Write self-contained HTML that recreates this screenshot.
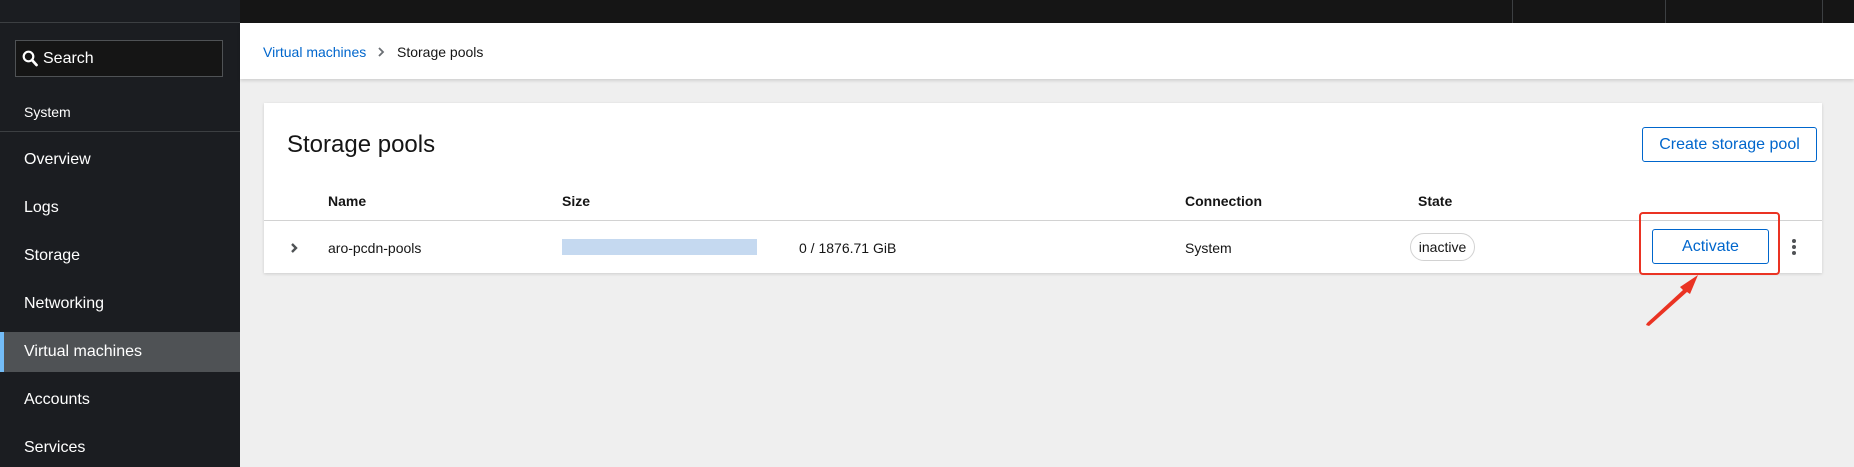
<!DOCTYPE html>
<html><head><meta charset="utf-8"><style>
*{box-sizing:border-box;margin:0;padding:0}
body{width:1854px;height:467px;overflow:hidden;background:#efefef;font-family:"Liberation Sans",sans-serif;position:relative}
.a{position:absolute}
.side{left:0;top:0;width:240px;height:467px;background:#1b1d21}
.nav{left:24px;color:#fff;font-size:16px;transform:translateY(-50%)}
.t{font-size:14px;color:#151515;transform:translateY(-50%)}
.th{font-weight:bold}
</style></head><body>
<div class="a side"></div>
<div class="a" style="left:0;top:0;width:240px;height:23px;border-bottom:1px solid #3c3f42"></div>
<div class="a" style="left:240px;top:0;width:1614px;height:23px;background:#151515"></div>
<div class="a" style="left:1512px;top:0;width:1px;height:23px;background:#3c3f42"></div>
<div class="a" style="left:1665px;top:0;width:1px;height:23px;background:#3c3f42"></div>
<div class="a" style="left:1822px;top:0;width:1px;height:23px;background:#3c3f42"></div>
<div class="a" style="left:15px;top:40px;width:208px;height:37px;border:1px solid #4f5255;background:#151515"></div>
<svg class="a" style="left:22px;top:50px" width="16" height="17" viewBox="0 0 16 17"><circle cx="6.5" cy="6.5" r="4.8" fill="none" stroke="#fff" stroke-width="2.2"/><path d="M10 10l4.5 5" stroke="#fff" stroke-width="2.8" stroke-linecap="round"/></svg>
<div class="a nav" style="left:43px;top:59px">Search</div>
<div class="a nav" style="top:112px;font-size:14px">System</div>
<div class="a" style="left:0;top:131px;width:240px;height:1px;background:#3c3f42"></div>
<div class="a nav" style="top:160px">Overview</div>
<div class="a nav" style="top:208px">Logs</div>
<div class="a nav" style="top:256px">Storage</div>
<div class="a nav" style="top:304px">Networking</div>
<div class="a" style="left:0;top:332px;width:240px;height:40px;background:#4f5255"></div>
<div class="a" style="left:0;top:332px;width:4px;height:40px;background:#73bcf7"></div>
<div class="a nav" style="top:352px">Virtual machines</div>
<div class="a nav" style="top:400px">Accounts</div>
<div class="a nav" style="top:448px">Services</div>
<div class="a" style="left:240px;top:23px;width:1614px;height:56px;background:#fff;box-shadow:0 2px 3px rgba(0,0,0,.12)"></div>
<div class="a t" style="left:263px;top:52px;color:#0066cc">Virtual machines</div>
<svg class="a" style="left:377px;top:47px" width="8" height="10"><path d="M2 1l4 4-4 4" fill="none" stroke="#6a6e73" stroke-width="1.8"/></svg>
<div class="a t" style="left:397px;top:52px">Storage pools</div>
<div class="a" style="left:264px;top:103px;width:1558px;height:170px;background:#fff;box-shadow:0 1px 3px rgba(0,0,0,.15)"></div>
<div class="a" style="left:287px;top:145px;font-size:24px;color:#151515;transform:translateY(-50%)">Storage pools</div>
<div class="a" style="left:1642px;top:127px;width:175px;height:35px;border:1px solid #0066cc;border-radius:3px;color:#0066cc;font-size:16px;text-align:center;line-height:33px">Create storage pool</div>
<div class="a t th" style="left:328px;top:201px">Name</div>
<div class="a t th" style="left:562px;top:201px">Size</div>
<div class="a t th" style="left:1185px;top:201px">Connection</div>
<div class="a t th" style="left:1418px;top:201px">State</div>
<div class="a" style="left:264px;top:220px;width:1558px;height:1px;background:#d2d2d2"></div>
<svg class="a" style="left:290px;top:243px" width="8" height="10"><path d="M2 1l4 4-4 4" fill="none" stroke="#4f5255" stroke-width="2.4"/></svg>
<div class="a t" style="left:328px;top:248px">aro-pcdn-pools</div>
<div class="a" style="left:562px;top:239px;width:195px;height:16px;background:#c5d9f0"></div>
<div class="a t" style="left:799px;top:248px">0 / 1876.71 GiB</div>
<div class="a t" style="left:1185px;top:248px">System</div>
<div class="a" style="left:1410px;top:233px;width:65px;height:28px;border:1px solid #d2d2d2;border-radius:14px;font-size:14px;color:#151515;text-align:center;line-height:26px">inactive</div>
<div class="a" style="left:1652px;top:229px;width:117px;height:35px;border:1px solid #0066cc;border-radius:3px;color:#0066cc;font-size:16px;text-align:center;line-height:33px">Activate</div>
<div class="a" style="left:1639px;top:212px;width:141px;height:63px;border:2px solid #ea3323;border-radius:4px"></div>
<svg class="a" style="left:1790px;top:238px" width="8" height="18"><circle cx="4" cy="3" r="2" fill="#4f5255"/><circle cx="4" cy="9" r="2" fill="#4f5255"/><circle cx="4" cy="15" r="2" fill="#4f5255"/></svg>
<svg class="a" style="left:1640px;top:270px" width="70" height="60"><path d="M6 55L7 53 43 20 40 17 58 5 50 24 47 22 9 56Z" fill="#ea3323"/></svg>
</body></html>
